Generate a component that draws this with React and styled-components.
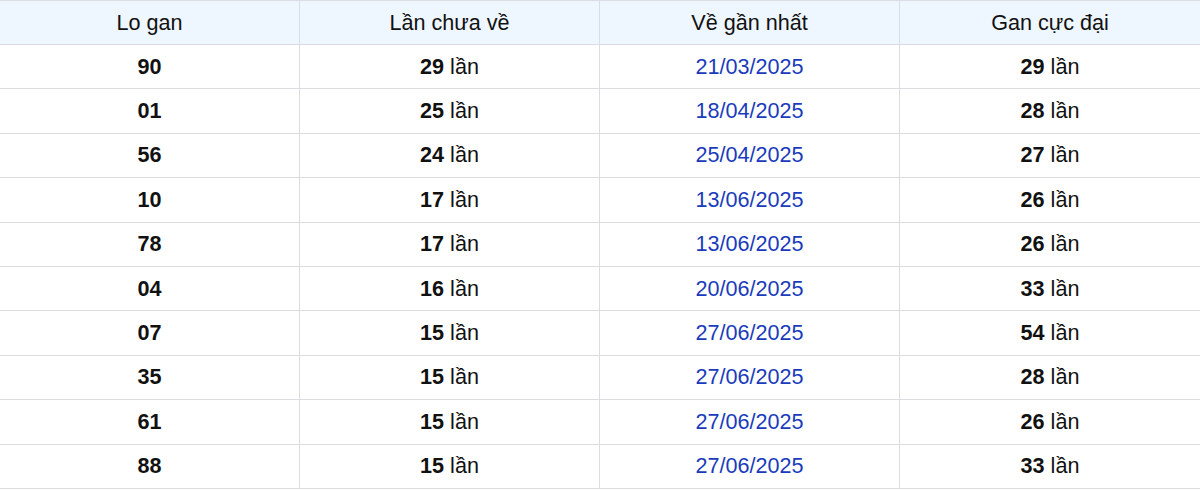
import styled, { createGlobalStyle } from "styled-components";

const GlobalStyle = createGlobalStyle`
  body {
    margin: 0;
    background: #fff;
    font-family: "Liberation Sans", Arial, sans-serif;
  }
`;

const Table = styled.div`
  width: 1200px;
  border-top: 1px solid #dcdde2;
  box-sizing: border-box;
`;

const Row = styled.div`
  display: grid;
  grid-template-columns: repeat(4, 300px);
  height: ${(props) => (props.head ? "44px" : "44.4px")};
  box-sizing: border-box;
  border-bottom: 1px solid #dcdde2;
  background: ${(props) => (props.head ? "#eef6ff" : "#fff")};
`;

const Cell = styled.div`
  display: flex;
  align-items: center;
  justify-content: center;
  white-space: pre;
  box-sizing: border-box;
  border-right: 1px solid #dcdde2;
  font-size: 21.6px;
  color: ${(props) => (props.blue ? "#1a3bbb" : "#111")};
  font-weight: ${(props) => (props.bold ? 700 : 400)};
  &:last-child {
    border-right: none;
  }
  b {
    font-weight: 700;
  }
`;

const rows = [
  ["90", 29, "21/03/2025", 29],
  ["01", 25, "18/04/2025", 28],
  ["56", 24, "25/04/2025", 27],
  ["10", 17, "13/06/2025", 26],
  ["78", 17, "13/06/2025", 26],
  ["04", 16, "20/06/2025", 33],
  ["07", 15, "27/06/2025", 54],
  ["35", 15, "27/06/2025", 28],
  ["61", 15, "27/06/2025", 26],
  ["88", 15, "27/06/2025", 33],
];

const App = () => {
  return (
    <>
      <GlobalStyle />
      <Table>
        <Row head>
          <Cell>Lo gan</Cell>
          <Cell>Lần chưa về</Cell>
          <Cell>Về gần nhất</Cell>
          <Cell>Gan cực đại</Cell>
        </Row>
        {rows.map(([lo, miss, date, max]) => (
          <Row key={lo}>
            <Cell bold>{lo}</Cell>
            <Cell>
              <b>{miss}</b> lần
            </Cell>
            <Cell blue>{date}</Cell>
            <Cell>
              <b>{max}</b> lần
            </Cell>
          </Row>
        ))}
      </Table>
    </>
  );
};

export default App;
